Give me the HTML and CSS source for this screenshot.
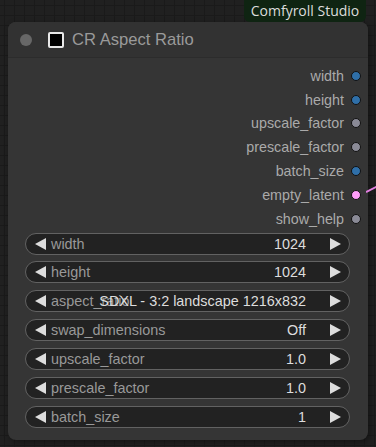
FILE: index.html
```html
<!DOCTYPE html>
<html lang="en">
<head>
    <meta charset="UTF-8">
    <title>CR Aspect Ratio</title>
    <link rel="stylesheet" href="styles.css">
</head>
<body>
    <div id="canvas">
        <div class="badge-row">
            <span class="badge">Comfyroll Studio</span>
        </div>
        <div class="node">
            <div class="title">
                <span class="title-dot"></span>
                <span class="check"></span>
                <span class="title-text">CR Aspect Ratio</span>
            </div>
            <div class="outputs">
                <div class="out"><span>width</span><i class="dot int"></i></div>
                <div class="out"><span>height</span><i class="dot int"></i></div>
                <div class="out"><span>upscale_factor</span><i class="dot float"></i></div>
                <div class="out"><span>prescale_factor</span><i class="dot float"></i></div>
                <div class="out"><span>batch_size</span><i class="dot int"></i></div>
                <div class="out"><span>empty_latent</span><i class="dot latent"></i></div>
                <div class="out"><span>show_help</span><i class="dot float"></i></div>
            </div>
            <div class="widgets">
                <div class="widget">
                    <svg class="arrow" viewBox="0 0 11 12"><polygon points="11,0 11,12 0,6"/></svg>
                    <div class="cell"><span class="label">width</span><span class="value">1024</span></div>
                    <svg class="arrow" viewBox="0 0 11 12"><polygon points="0,0 0,12 11,6"/></svg>
                </div>
                <div class="widget">
                    <svg class="arrow" viewBox="0 0 11 12"><polygon points="11,0 11,12 0,6"/></svg>
                    <div class="cell"><span class="label">height</span><span class="value">1024</span></div>
                    <svg class="arrow" viewBox="0 0 11 12"><polygon points="0,0 0,12 11,6"/></svg>
                </div>
                <div class="widget">
                    <svg class="arrow" viewBox="0 0 11 12"><polygon points="11,0 11,12 0,6"/></svg>
                    <div class="cell"><span class="label">aspect_ratio</span><span class="value">SDXL - 3:2 landscape 1216x832</span></div>
                    <svg class="arrow" viewBox="0 0 11 12"><polygon points="0,0 0,12 11,6"/></svg>
                </div>
                <div class="widget">
                    <svg class="arrow" viewBox="0 0 11 12"><polygon points="11,0 11,12 0,6"/></svg>
                    <div class="cell"><span class="label">swap_dimensions</span><span class="value">Off</span></div>
                    <svg class="arrow" viewBox="0 0 11 12"><polygon points="0,0 0,12 11,6"/></svg>
                </div>
                <div class="widget">
                    <svg class="arrow" viewBox="0 0 11 12"><polygon points="11,0 11,12 0,6"/></svg>
                    <div class="cell"><span class="label">upscale_factor</span><span class="value">1.0</span></div>
                    <svg class="arrow" viewBox="0 0 11 12"><polygon points="0,0 0,12 11,6"/></svg>
                </div>
                <div class="widget">
                    <svg class="arrow" viewBox="0 0 11 12"><polygon points="11,0 11,12 0,6"/></svg>
                    <div class="cell"><span class="label">prescale_factor</span><span class="value">1.0</span></div>
                    <svg class="arrow" viewBox="0 0 11 12"><polygon points="0,0 0,12 11,6"/></svg>
                </div>
                <div class="widget">
                    <svg class="arrow" viewBox="0 0 11 12"><polygon points="11,0 11,12 0,6"/></svg>
                    <div class="cell"><span class="label">batch_size</span><span class="value">1</span></div>
                    <svg class="arrow" viewBox="0 0 11 12"><polygon points="0,0 0,12 11,6"/></svg>
                </div>
            </div>
        </div>
        <svg class="link" viewBox="0 0 12 10"><line x1="0" y1="8" x2="12" y2="2"/></svg>
    </div>
</body>
</html>
```

FILE: styles.css
```css
* {
    margin: 0;
    padding: 0;
    box-sizing: border-box;
}
body {
    background-color: #1f1f1f;
    font-family: 'Liberation Sans', Arial, sans-serif;
    overflow: hidden;
}
#canvas {
    position: relative;
    width: 376px;
    height: 447px;
    background-color: #202020;
    background-image:
        linear-gradient(#1a1a1a 1px, transparent 1px),
        linear-gradient(90deg, #1a1a1a 1px, transparent 1px);
    background-size: 10px 10px;
    background-position: 4px 5px;
}
.badge-row {
    display: flex;
    justify-content: flex-end;
    padding-right: 10px;
}
.badge {
    height: 22px;
    width: 122px;
    background-color: #0f2412;
    color: #dcdcdc;
    font-family: 'Open Sans', 'Noto Sans', sans-serif;
    font-size: 14px;
    line-height: 21px;
    text-align: center;
    border-radius: 0 0 6px 6px;
}
.node {
    margin-left: 8px;
    width: 360px;
    height: 418px;
    background-color: #353535;
    border-radius: 8px;
    box-shadow: 2px 2px 6px rgba(0, 0, 0, 0.4);
}
.title {
    height: 36px;
    display: flex;
    align-items: center;
    padding-left: 12px;
    background-color: #323232;
    border-radius: 8px 8px 0 0;
    border-bottom: 1px solid #2c2c2c;
}
.title-dot {
    width: 12px;
    height: 12px;
    border-radius: 50%;
    background-color: #676767;
}
.check {
    width: 16px;
    height: 16px;
    margin-left: 16px;
    background-color: #000;
    border: 2px solid #e8e8e8;
    border-radius: 2px;
}
.title-text {
    margin-left: 8px;
    color: #9a9a9a;
    font-size: 16.6px;
}
.outputs {
    padding-top: 6px;
    padding-right: 7px;
}
.out {
    height: 23.8px;
    display: flex;
    align-items: center;
    justify-content: flex-end;
    gap: 7px;
    color: #aaaaaa;
    font-size: 14.3px;
}
.dot {
    width: 10px;
    height: 10px;
    border-radius: 50%;
    border: 1px solid #111;
}
.int { background-color: #2f6fa8; }
.float { background-color: #8a8a96; }
.latent { background-color: #ff9cf9; }
.widgets {
    display: flex;
    flex-direction: column;
    gap: 6.9px;
    padding: 2px 18px 0 17px;
}
.widget {
    height: 22px;
    display: flex;
    align-items: center;
    padding: 0 8px 0 9px;
    background-color: #222222;
    border: 1px solid #626262;
    border-radius: 11px;
    font-size: 14.4px;
}
.arrow {
    width: 11px;
    height: 12px;
    flex: none;
    fill: #dddddd;
}
.cell {
    flex: 1;
    display: grid;
    margin: 0 24px 0 5px;
    white-space: nowrap;
}
.label, .value {
    grid-area: 1 / 1;
}
.label {
    justify-self: start;
    color: #999999;
}
.value {
    justify-self: end;
    color: #dddddd;
}
.link {
    position: absolute;
    left: 366px;
    top: 184px;
    width: 12px;
    height: 10px;
    stroke: #e27ee0;
    stroke-width: 2;
}
```
